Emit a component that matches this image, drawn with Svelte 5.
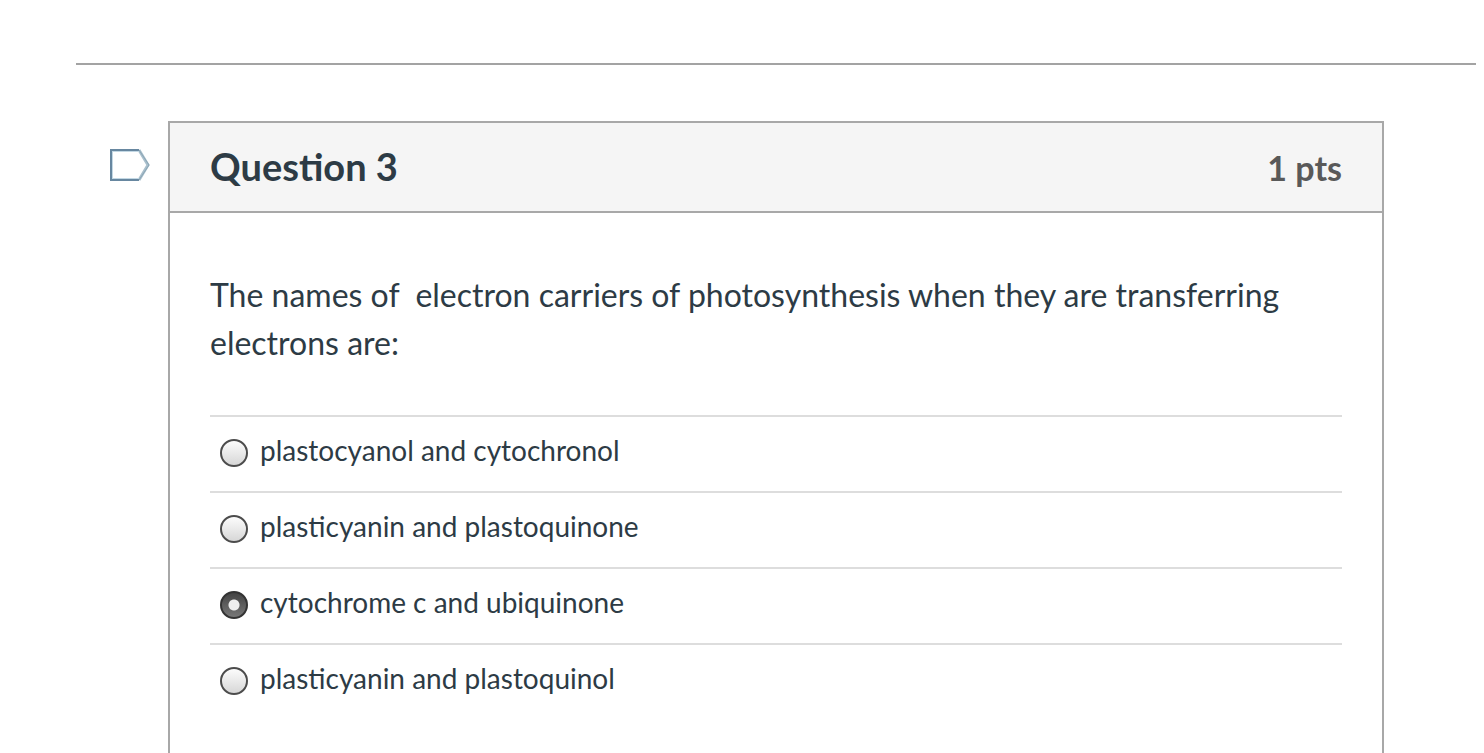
<script>
	const question = {
		title: 'Question 3',
		points: '1 pts',
		text: 'The names of \u00a0electron carriers of photosynthesis when they are transferring electrons are:',
		answers: [
			'plastocyanol and cytochronol',
			'plasticyanin and plastoquinone',
			'cytochrome c and ubiquinone',
			'plasticyanin and plastoquinol'
		]
	};

	let selected = $state(2);
	let flagged = $state(false);
</script>

<main>
	<hr />
	<div class="question-row">
		<button
			type="button"
			class="flag"
			aria-label="Flag question"
			aria-pressed={flagged}
			onclick={() => (flagged = !flagged)}
		>
			<svg width="44" height="34" viewBox="0 0 44 34">
				<path d="M3 2h28l10 15-10 15H3z" fill={flagged ? '#fcd95b' : '#fff'} />
				<path d="M31 2l9 15-9 15" fill="none" stroke="#a9bfcc" stroke-width="3" />
				<path d="M31 3H4v28h27" fill="none" stroke="#c3d8e4" stroke-width="2" />
				<path d="M31 2H3v30h28" fill="none" stroke="#6787a0" stroke-width="2" />
				<path d="M31 2l10 15-10 15" fill="none" stroke="#8aa5b5" stroke-width="1" />
			</svg>
		</button>

		<section class="question">
			<header>
				<h2>{question.title}</h2>
				<span class="points">{question.points}</span>
			</header>
			<div class="body">
				<p id="question-text">{question.text}</p>
				<div class="answers" role="radiogroup" aria-labelledby="question-text">
					{#each question.answers as answer, i}
						<label>
							<input type="radio" name="answer" value={i} bind:group={selected} />
							<span>{answer}</span>
						</label>
					{/each}
				</div>
			</div>
		</section>
	</div>
</main>

<style>
	:global(body) {
		background: #fff;
		overflow: hidden;
	}

	main {
		padding: 63px 8px 0 76px;
		font-family: Lato, 'Liberation Sans', sans-serif;
		color: #2d3b45;
	}

	hr {
		margin: 0 0 56px;
		border: 0;
		border-top: 2px solid #a3a3a3;
	}

	.question-row {
		display: flex;
		align-items: flex-start;
		padding: 0 92px 0 32px;
	}

	.flag {
		flex: none;
		width: 60px;
		margin-top: 27px;
		padding: 0;
		border: 0;
		background: none;
		text-align: left;
		cursor: pointer;
	}

	.flag svg {
		display: block;
	}

	.question {
		flex: 1;
		border: 2px solid #a8a8a8;
	}

	header {
		display: flex;
		align-items: center;
		justify-content: space-between;
		height: 88px;
		padding: 0 40px;
		border-bottom: 2px solid #a8a8a8;
		background: #f5f5f5;
	}

	h2 {
		margin: 0;
		padding-bottom: 2px;
		font-size: 38px;
		font-weight: 700;
	}

	.points {
		font-size: 34px;
		font-weight: 700;
		color: #595959;
	}

	.body {
		padding: 58px 40px 80px;
	}

	p {
		margin: 0 0 48px;
		font-size: 32px;
		line-height: 48px;
	}

	label {
		display: flex;
		align-items: center;
		gap: 12px;
		height: 72px;
		padding: 0 0 2px 10px;
		border-top: 2px solid #ddd;
		font-size: 28px;
	}

	label span {
		padding-bottom: 6px;
	}

	input {
		appearance: none;
		flex: none;
		width: 28px;
		height: 28px;
		margin: 0;
		border: 2px solid #4c4c4c;
		border-radius: 50%;
		background: linear-gradient(#fff, #d4d4d4) border-box;
	}

	input:checked {
		border-color: #333;
		background: radial-gradient(circle, #eee 5px, transparent 6px), linear-gradient(#444, #777);
	}
</style>
